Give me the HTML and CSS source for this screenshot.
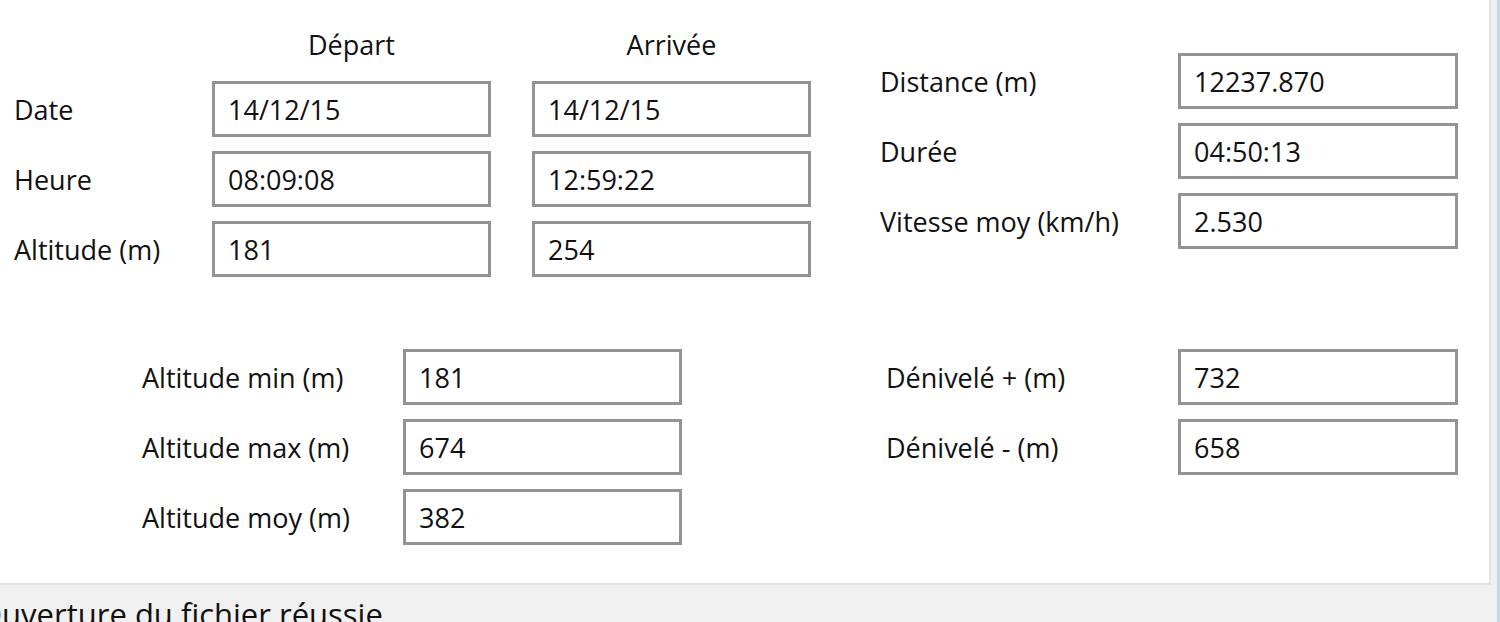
FILE: index.html
```html
<!DOCTYPE html>
<html>

<head>
    <link rel="stylesheet" href="styles.css">
</head>

<body>
    <div class="window">
        <div class="main">
            <div class="panel">
                <div class="section top">
                    <div class="grid trip">
                        <span></span>
                        <span class="head">Départ</span>
                        <span class="head">Arrivée</span>

                        <span class="label">Date</span>
                        <div class="box">14/12/15</div>
                        <div class="box">14/12/15</div>

                        <span class="label">Heure</span>
                        <div class="box">08:09:08</div>
                        <div class="box">12:59:22</div>

                        <span class="label">Altitude (m)</span>
                        <div class="box">181</div>
                        <div class="box">254</div>
                    </div>
                    <div class="grid totals">
                        <span class="label">Distance (m)</span>
                        <div class="box">12237.870</div>

                        <span class="label">Durée</span>
                        <div class="box">04:50:13</div>

                        <span class="label">Vitesse moy (km/h)</span>
                        <div class="box">2.530</div>
                    </div>
                </div>
                <div class="section bottom">
                    <div class="grid alti">
                        <span class="label">Altitude min (m)</span>
                        <div class="box">181</div>

                        <span class="label">Altitude max (m)</span>
                        <div class="box">674</div>

                        <span class="label">Altitude moy (m)</span>
                        <div class="box">382</div>
                    </div>
                    <div class="grid deniv">
                        <span class="label">Dénivelé + (m)</span>
                        <div class="box">732</div>

                        <span class="label">Dénivelé - (m)</span>
                        <div class="box">658</div>
                    </div>
                </div>
            </div>
            <div class="status">Ouverture du fichier réussie</div>
        </div>
        <div class="edge"></div>
    </div>
</body>

</html>
```
FILE: styles.css
```css
html,
body {
    margin: 0;
    height: 100%;
    overflow: hidden;
}

body {
    background-color: #f0f0f0;
    font-family: 'Open Sans', 'Liberation Sans', sans-serif;
    font-size: 27px;
    color: #111111;
}

.window {
    display: flex;
    height: 100%;
}

.main {
    width: 1497px;
    display: flex;
    flex-direction: column;
}

.edge {
    width: 3px;
    background-color: #c3d6ec;
}

.panel {
    flex-shrink: 0;
    width: 1491px;
    height: 585px;
    box-sizing: border-box;
    background-color: #ffffff;
    border-right: 2px solid #e2e2e2;
    border-bottom: 2px solid #e2e2e2;
    padding-left: 14px;
}

.section {
    display: flex;
    align-items: flex-start;
}

.top {
    padding-top: 27px;
}

.bottom {
    margin-top: 72px;
}

.grid {
    display: grid;
    row-gap: 14px;
    align-items: center;
}

.trip {
    grid-template-columns: 157px 279px 279px;
    grid-template-rows: 40px repeat(3, 56px);
    column-gap: 41px;
}

.totals {
    grid-template-columns: 298px 280px;
    grid-auto-rows: 56px;
    margin-left: 69px;
    margin-top: 26px;
}

.alti {
    grid-template-columns: 261px 279px;
    grid-auto-rows: 56px;
    margin-left: 128px;
}

.deniv {
    grid-template-columns: 292px 280px;
    grid-auto-rows: 56px;
    margin-left: 204px;
}

.head {
    text-align: center;
    align-self: start;
    line-height: 36px;
}

.label {
    white-space: nowrap;
}

.box {
    height: 56px;
    box-sizing: border-box;
    border: 3px solid #939393;
    background-color: #ffffff;
    padding-left: 13px;
    display: flex;
    align-items: center;
}

.status {
    padding-top: 8px;
    margin-left: -22px;
    font-size: 31px;
    white-space: nowrap;
}
```
